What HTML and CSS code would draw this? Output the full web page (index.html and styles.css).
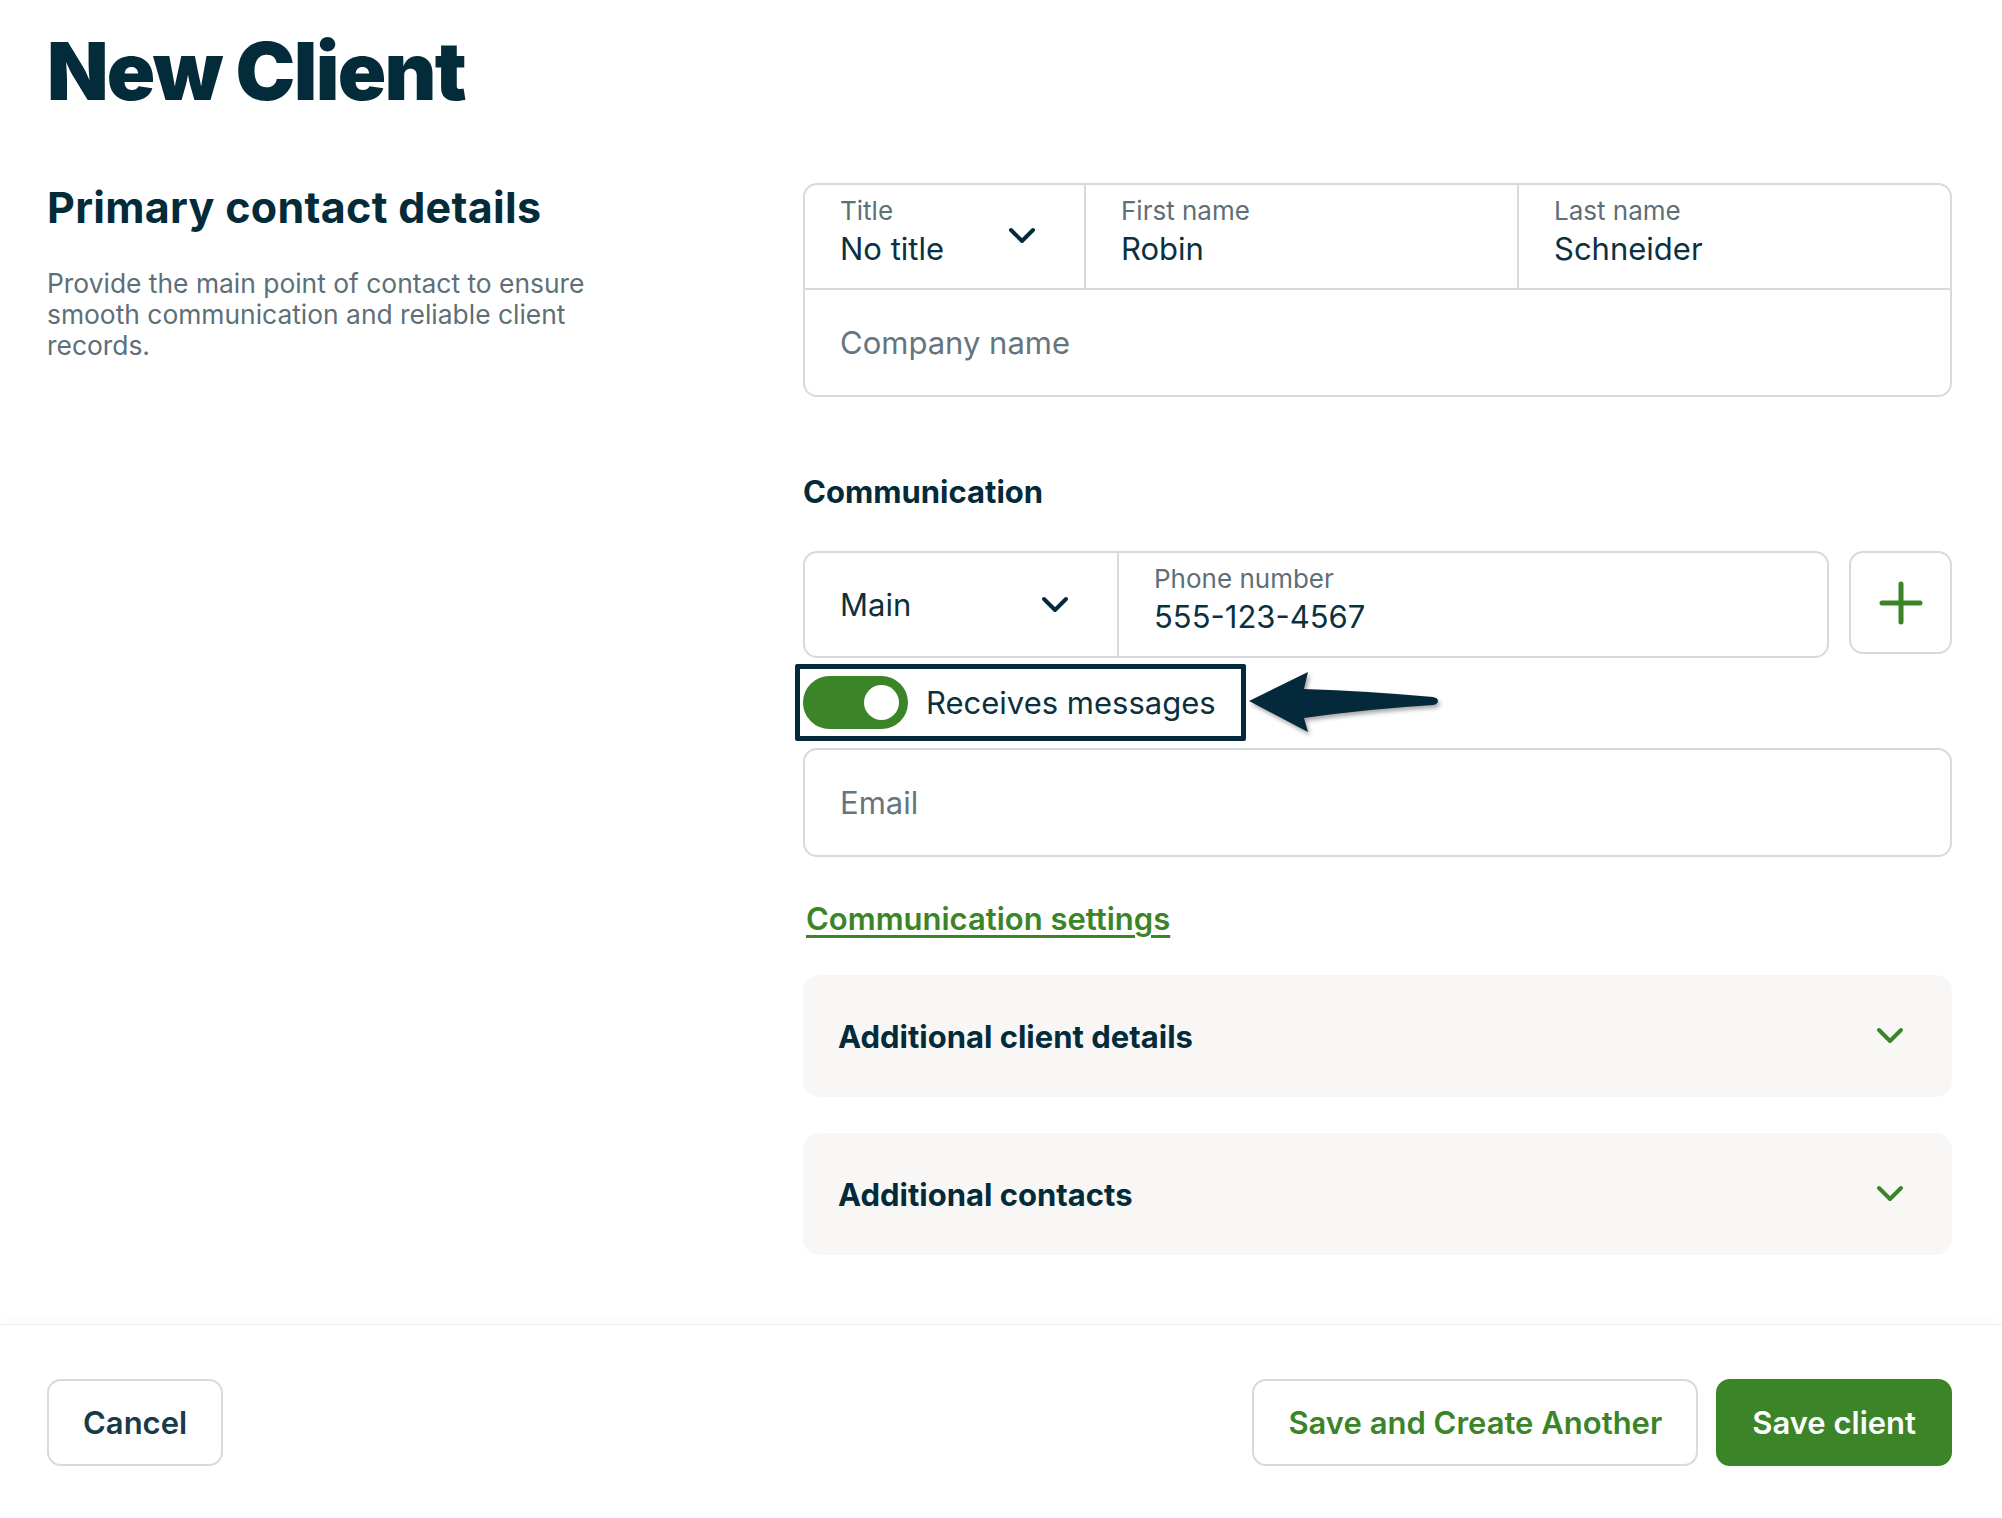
FILE: index.html
```html
<!DOCTYPE html>
<html lang="en">

<head>
    <meta charset="UTF-8">
    <meta name="viewport" content="width=device-width, initial-scale=1.0">
    <title>New Client</title>

    <link rel="stylesheet" href="styles.css">
</head>

<body>
    <div class="page">
        <h1 class="page_title">New Client</h1>

        <div class="section">
            <div class="section_intro">
                <h2>Primary contact details</h2>
                <p>Provide the main point of contact to ensure smooth communication and reliable client records.</p>
            </div>

            <div class="section_form">
                <!-- name card -->
                <div class="input_group">
                    <div class="names_row">
                        <div class="field field_select">
                            <div class="field_text">
                                <span class="field_label">Title</span>
                                <span class="field_value">No title</span>
                            </div>
                            <svg class="chevron" width="28" height="18" viewBox="0 0 28 18">
                                <path d="M3 3 L14 14 L25 3" />
                            </svg>
                        </div>
                        <div class="field">
                            <div class="field_text">
                                <span class="field_label">First name</span>
                                <span class="field_value">Robin</span>
                            </div>
                        </div>
                        <div class="field">
                            <div class="field_text">
                                <span class="field_label">Last name</span>
                                <span class="field_value">Schneider</span>
                            </div>
                        </div>
                    </div>
                    <div class="field field_empty">
                        <span class="field_placeholder">Company name</span>
                    </div>
                </div>

                <h3 class="sub_title">Communication</h3>

                <div class="phone_row">
                    <div class="input_group phone_group">
                        <div class="field field_select phone_type">
                            <span class="field_value">Main</span>
                            <svg class="chevron" width="28" height="18" viewBox="0 0 28 18">
                                <path d="M3 3 L14 14 L25 3" />
                            </svg>
                        </div>
                        <div class="field phone_number">
                            <div class="field_text">
                                <span class="field_label">Phone number</span>
                                <span class="field_value">555-123-4567</span>
                            </div>
                        </div>
                    </div>
                    <button class="add_btn" type="button">
                        <svg width="44" height="44" viewBox="0 0 44 44">
                            <path d="M22 3 V41 M3 22 H41" />
                        </svg>
                    </button>
                </div>

                <div class="toggle_row">
                    <span class="toggle"><span class="toggle_knob"></span></span>
                    <span class="toggle_label">Receives messages</span>

                    <!-- annotation arrow -->
                    <svg class="arrow" width="192" height="66" viewBox="0 0 192 66">
                        <path d="M2 32 L61 3 L57 20 Q120 22 186 28 Q191 29 191 32 Q191 35 186 36 Q120 40 57 49 L61 63 Z" />
                    </svg>
                </div>

                <div class="input_group email_group">
                    <div class="field field_empty">
                        <span class="field_placeholder">Email</span>
                    </div>
                </div>

                <a class="settings_link" href="#">Communication settings</a>

                <div class="accordion">
                    <span>Additional client details</span>
                    <svg class="chevron chevron_green" width="28" height="18" viewBox="0 0 28 18">
                        <path d="M3 3 L14 14 L25 3" />
                    </svg>
                </div>
                <div class="accordion">
                    <span>Additional contacts</span>
                    <svg class="chevron chevron_green" width="28" height="18" viewBox="0 0 28 18">
                        <path d="M3 3 L14 14 L25 3" />
                    </svg>
                </div>
            </div>
        </div>
    </div>

    <div class="footer">
        <button class="btn btn_cancel" type="button">Cancel</button>
        <div class="footer_right">
            <button class="btn btn_another" type="button">Save and Create Another</button>
            <button class="btn btn_save" type="button">Save client</button>
        </div>
    </div>
</body>

</html>
```

FILE: styles.css
```css
* {
    padding: 0;
    margin: 0;
    box-sizing: border-box;
}

body {
    font-family: Inter, "Noto Sans", sans-serif;
    color: #032b3a;
    background-color: #fff;
}

.page {
    padding: 23px 50px 0 47px;
}

.page_title {
    font-size: 80px;
    line-height: 96px;
    font-weight: 900;
    letter-spacing: -1.7px;
    color: #032b3a;
}

.section {
    display: grid;
    grid-template-columns: 1fr 1149px;
    margin-top: 64px;
}

.section_intro h2 {
    font-size: 43px;
    line-height: 48px;
    font-weight: 700;
    letter-spacing: 0.3px;
}

.section_intro p {
    margin-top: 37px;
    max-width: 600px;
    font-size: 26.4px;
    line-height: 31px;
    color: #5d6f78;
}

/* inputs */
.input_group {
    border: 2px solid #d6dbde;
    border-radius: 14px;
    background-color: #fff;
}

.names_row {
    display: grid;
    grid-template-columns: 279px 1fr 1fr;
    height: 105px;
    border-bottom: 2px solid #d6dbde;
}

.names_row .field + .field {
    border-left: 2px solid #d6dbde;
}

.field {
    display: flex;
    align-items: flex-start;
    padding: 10px 35px 0;
}

.field_text {
    display: flex;
    flex-direction: column;
    gap: 3px;
}

.field_label {
    font-size: 26px;
    line-height: 32px;
    color: #5d6f78;
}

.field_value {
    font-size: 31px;
    line-height: 38px;
    color: #0b3140;
}

.field_select {
    justify-content: space-between;
    padding-right: 48px;
}

.field_select .chevron {
    align-self: center;
    margin-top: -12px;
}

.field_empty {
    height: 105px;
    align-items: center;
    padding-top: 0;
}

.field_placeholder {
    font-size: 31px;
    color: #65757e;
}

.chevron path {
    fill: none;
    stroke: #032b3a;
    stroke-width: 4;
    stroke-linecap: round;
    stroke-linejoin: round;
}

.chevron_green path {
    stroke: #3b8427;
}

.sub_title {
    margin-top: 77px;
    font-size: 31px;
    line-height: 36px;
    font-weight: 700;
}

.phone_row {
    display: flex;
    gap: 20px;
    margin-top: 41px;
}

.phone_group {
    flex: 1;
    display: flex;
    height: 107px;
}

.phone_type {
    width: 314px;
    align-items: center;
    padding-top: 0;
    border-right: 2px solid #d6dbde;
}

.phone_type .chevron {
    margin-top: 0;
}

.phone_number {
    flex: 1;
}

.add_btn {
    width: 103px;
    height: 103px;
    border: 2px solid #d6dbde;
    border-radius: 14px;
    background-color: #fff;
    display: flex;
    align-items: center;
    justify-content: center;
}

.add_btn path {
    fill: none;
    stroke: #3b8427;
    stroke-width: 5;
    stroke-linecap: round;
}

/* toggle with annotation box */
.toggle_row {
    position: relative;
    display: flex;
    align-items: center;
    gap: 18px;
    width: 451px;
    height: 77px;
    margin: 6px 0 0 -8px;
    padding: 0 0 0 3px;
    border: 5px solid #04293a;
    border-radius: 2px;
}

.toggle {
    display: flex;
    align-items: center;
    justify-content: flex-end;
    width: 105px;
    height: 53px;
    padding-right: 9px;
    border-radius: 27px;
    background-color: #3b8427;
}

.toggle_knob {
    width: 35px;
    height: 35px;
    border-radius: 50%;
    background-color: #fff;
}

.toggle_label {
    font-size: 31px;
    color: #0b3140;
}

.arrow {
    position: absolute;
    left: 447px;
    top: 0;
    filter: drop-shadow(2px 3px 2px rgba(0, 0, 0, .35));
}

.arrow path {
    fill: #04293a;
}

.email_group {
    margin-top: 7px;
}

.settings_link {
    display: inline-block;
    margin: 44px 0 0 3px;
    font-size: 31px;
    line-height: 36px;
    font-weight: 600;
    color: #3b8427;
    text-decoration: underline;
    text-decoration-thickness: 3px;
    text-underline-offset: 5px;
}

.accordion {
    display: flex;
    align-items: center;
    justify-content: space-between;
    height: 122px;
    margin-top: 38px;
    padding: 0 48px 0 35px;
    border-radius: 16px;
    background-color: #f8f7f5;
    font-size: 31px;
    font-weight: 700;
}

.accordion + .accordion {
    margin-top: 36px;
}

/* footer */
.footer {
    display: flex;
    justify-content: space-between;
    margin-top: 69px;
    padding: 54px 50px 50px 47px;
    border-top: 1px solid #efefef;
    box-shadow: 0 -4px 10px rgba(0, 0, 0, .025);
}

.footer_right {
    display: flex;
    gap: 18px;
}

.btn {
    height: 87px;
    padding: 0 34px;
    border: 2px solid #d6dbde;
    border-radius: 14px;
    background-color: #fff;
    font-family: Inter, "Noto Sans", sans-serif;
    font-size: 31px;
    font-weight: 600;
    cursor: pointer;
}

.btn_cancel {
    color: #193a48;
}

.btn_another {
    color: #3b8427;
}

.btn_save {
    border-color: #3b8427;
    background-color: #3b8427;
    color: #fff;
}
```
